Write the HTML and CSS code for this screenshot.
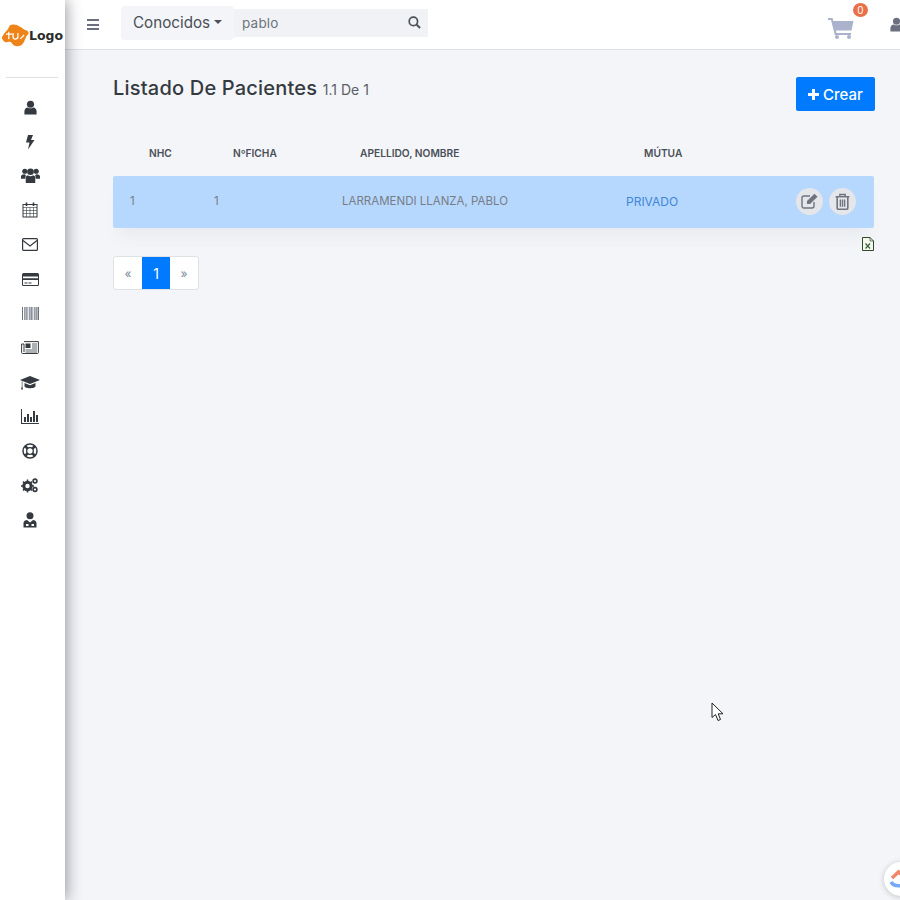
FILE: index.html
```html
<!DOCTYPE html>
<html lang="en">
<head>
    <meta charset="UTF-8">
    <title>Listado De Pacientes</title>
    <link rel="stylesheet" href="styles.css">
</head>
<body>
    <div class="app">
        <aside class="sidebar">
            <div class="logo">
                <svg class="logo-blob" viewBox="0 0 30 24"><path d="M9 1.500C12 -.5 17 .5 19 2.500C22 3 23 6 26 6.500C29 7.500 29.500 10 27.500 11.500C25.500 13 26 15 24.500 17C23.500 21 20 24 15.500 23C11.500 22.500 12 19 9 18.500C6 18.500 5 20 3 18C1 16 0 14 2 12C3 9 7 7 9 1.500Z" fill="#ee8418"/><path d="M8 8v8M5 10.500h6.500M12.500 9.500v4c0 3 4 3 5 0v-4M17.500 9.500v5.500M20 15.500l4-4" stroke="#fff" stroke-width="1.300" fill="none"/></svg>
                <span class="logo-text">Logo</span>
            </div>
            <hr class="side-rule">
            <nav class="side-nav">
                <a class="side-link"><svg viewBox="0 0 16 16" width="15" height="15"><circle cx="8" cy="4.500" r="3.800"/><path d="M1.500 15.500V12C1.500 9.500 3.500 8 5 8C6.500 9.200 9.500 9.200 11 8C12.500 8 14.500 9.500 14.500 12V15.500Z"/></svg></a>
                <a class="side-link"><svg viewBox="0 0 10 16" width="10" height="16"><path d="M3 1H8L6 6H9.500L3 15.500L4.500 8.500H1Z"/></svg></a>
                <a class="side-link"><svg viewBox="0 0 20 17" width="19" height="17"><circle cx="4" cy="4" r="2.700"/><circle cx="16" cy="4" r="2.700"/><circle cx="10" cy="4.500" r="3.500"/><path d="M0 12V9.500C0 8 2 7.300 3.500 7.300L5 8L4.500 12Z M20 12V9.500C20 8 18 7.300 16.500 7.300L15 8L15.500 12Z"/><path d="M5 16.500V11C5 9 6 8.500 7.500 8.500C9 9.500 11 9.500 12.500 8.500C14 8.500 15 9 15 11V16.500Z"/></svg></a>
                <a class="side-link"><svg viewBox="0 0 16 16" width="16" height="16" fill="none" stroke="#343a40"><rect x="1" y="2.500" width="14" height="12.500"/><path d="M1 5.500h14M1 8.500h14M1 11.500h14M4.500 5.500v9.500M8 5.500v9.500M11.500 5.500v9.500" stroke-width=".6"/><path d="M4.500 .5v3.500M11.500 .5v3.500" stroke-width="1.600"/></svg></a>
                <a class="side-link"><svg viewBox="0 0 16 13" width="16" height="13" fill="none" stroke="#343a40" stroke-width="1.200"><rect x=".6" y=".6" width="14.800" height="11.800" rx="1"/><path d="M1 2.500L8 8L15 2.500"/></svg></a>
                <a class="side-link"><svg viewBox="0 0 17 13" width="17" height="13"><path fill-rule="evenodd" d="M1.500 0h14A1.500 1.500 0 0 1 17 1.500v10a1.500 1.500 0 0 1-1.500 1.500h-14A1.500 1.500 0 0 1 0 11.500v-10A1.500 1.500 0 0 1 1.500 0ZM1 3.500v1.800h15V3.500ZM1 7v4.500c0 .3.200.500.500.500h14c.3 0 .500-.2.500-.5V7ZM2.500 9.500h3v1h-3ZM6.500 9.500h3v1h-3Z"/></svg></a>
                <a class="side-link"><svg viewBox="0 0 17 13" width="17" height="13" fill="#6c7280"><path d="M0 0h1v13H0ZM2 0h.7v13H2ZM3.500 0h1.200v13H3.500ZM5.500 0h.7v13h-.7ZM7 0h.7v13H7ZM8.500 0h1.300v13H8.500ZM10.500 0h.7v13h-.7ZM12 0h.7v13H12ZM13.500 0h1.200v13h-1.200ZM15.500 0h1.500v13h-1.500Z"/></svg></a>
                <a class="side-link"><svg viewBox="0 0 18 13" width="18" height="13" fill="none" stroke="#343a40"><path d="M3 .6H17.400V11.500a1 1 0 0 1-1 1H1.600a1 1 0 0 1-1-1V3H3V11"/><rect x="4.500" y="2.500" width="5" height="4.500" fill="#343a40" stroke="none"/><path d="M11 3h5M11 5h5M11 7h5M4.500 9h11.500M4.500 11h11.500" stroke-width=".8"/></svg></a>
                <a class="side-link"><svg viewBox="0 0 20 15" width="20" height="15"><path d="M10 1L20 5L10 9L0 5Z"/><path d="M4.500 8L10 10.200L15.500 8V11C15.500 14 4.500 14 4.500 11Z"/><path d="M1.800 6v5.500l-.8 3h2l-.6-3V6.500Z"/></svg></a>
                <a class="side-link"><svg viewBox="0 0 18 15" width="18" height="15"><path d="M0 0h1v14h17v1H0Z"/><path d="M3 8h2v5H3ZM6 5h2v8H6ZM9 8h2v5H9ZM12 2h2v11h-2ZM15 6h2v7h-2Z"/></svg></a>
                <a class="side-link"><svg viewBox="0 0 16 16" width="16" height="16" fill="none" stroke="#343a40"><circle cx="8" cy="8" r="7" stroke-width="1.500"/><circle cx="8" cy="8" r="3.300" stroke-width="1.300"/><path d="M3 3l2.800 2.800M13 3l-2.800 2.800M3 13l2.800-2.800M13 13l-2.800-2.800" stroke-width="2.600"/></svg></a>
                <a class="side-link"><svg viewBox="0 0 18 16" width="18" height="16" fill="none" stroke="#343a40"><circle cx="6.500" cy="9" r="3.700" stroke-width="3"/><circle cx="14" cy="4" r="1.900" stroke-width="1.600"/><circle cx="14" cy="12.500" r="1.900" stroke-width="1.600"/><path d="M6.500 2.500v13M0 9h13M2 4.500l9 9M11 4.500l-9 9" stroke-width="1.500" stroke-dasharray="2 9"/></svg></a>
                <a class="side-link"><svg viewBox="0 0 14 16" width="14" height="16"><circle cx="7" cy="3.800" r="3.500"/><path fill-rule="evenodd" d="M.5 15.500V11C.5 9 2.500 8 4 8L7 10.500L10 8C11.500 8 13.500 9 13.500 11V15.500ZM3 12v2h2.500v-2ZM8.500 12v2H11v-2Z"/></svg></a>
            </nav>
        </aside>

        <div class="main">
            <header class="topbar">
                <button class="burger"><span></span><span></span><span></span></button>
                <div class="search">
                    <button class="search-scope">Conocidos<i class="caret"></i></button>
                    <div class="search-box">
                        <span class="search-value">pablo</span>
                        <svg viewBox="0 0 14 14" width="13" height="13" fill="none" stroke="#495057" stroke-width="1.800"><circle cx="5.800" cy="5.800" r="4.500"/><path d="M9 9l4 4" stroke-width="2.200"/></svg>
                    </div>
                </div>
                <div class="top-right">
                    <div class="cart">
                        <svg viewBox="0 0 26 22" width="26" height="22"><path d="M0 1h4.500l.8 3H25.500l-2 9.500H8l.5 2.500H23v2H6.800L3 3H0Z" fill="#aab2cc"/><circle cx="9" cy="20" r="2" fill="#aab2cc"/><circle cx="21" cy="20" r="2" fill="#aab2cc"/></svg>
                        <span class="cart-badge">0</span>
                    </div>
                    <svg class="top-user" viewBox="0 0 16 16" width="15" height="15"><circle cx="8" cy="4.500" r="3.800"/><path d="M1.500 15.500V12C1.500 9.500 3.500 8 5 8C6.500 9.200 9.500 9.200 11 8C12.500 8 14.500 9.500 14.500 12V15.500Z"/></svg>
                </div>
            </header>

            <main class="content">
                <div class="page-head">
                    <h1>Listado De Pacientes <small>1.1 De 1</small></h1>
                    <button class="btn-create"><svg viewBox="0 0 11 11" width="11" height="11"><path d="M4 0h3v4h4v3H7v4H4V7H0V4h4Z" fill="#fff"/></svg>Crear</button>
                </div>

                <div class="thead">
                    <div>NHC</div>
                    <div>NºFICHA</div>
                    <div>APELLIDO, NOMBRE</div>
                    <div>MÚTUA</div>
                </div>
                <div class="trow">
                    <div>1</div>
                    <div>1</div>
                    <div>LARRAMENDI LLANZA, PABLO</div>
                    <div class="mutua">PRIVADO</div>
                    <div class="actions">
                        <button class="round-btn"><svg viewBox="0 0 18 16" width="18" height="16"><path d="M13 9v4a2 2 0 0 1-2 2H3a2 2 0 0 1-2-2V5a2 2 0 0 1 2-2h6" fill="none" stroke="#6f7480" stroke-width="1.400"/><path d="M6 8L13.500 .8l3 3L9 11H6Z" fill="#6f7480"/></svg></button>
                        <button class="round-btn"><svg viewBox="0 0 14 16" width="15" height="17" fill="none" stroke="#6f7480"><path d="M.5 3.500h13" stroke-width="1.400"/><path d="M4.500 3V1.300h5V3" stroke-width="1.400"/><path d="M2 3.500V14a1.300 1.300 0 0 0 1.300 1.300h7.400A1.300 1.300 0 0 0 12 14V3.500" stroke-width="1.500"/><path d="M5 6v7M7 6v7M9 6v7" stroke-width="1.300"/></svg></button>
                    </div>
                </div>
                <div class="excel-row">
                    <svg viewBox="0 0 12 14" width="12" height="14"><path d="M.5.500H8L11.500 4V13.500H.5Z" fill="#f6f8ee" stroke="#2f4a2a"/><path d="M8 .5V4h3.500" fill="none" stroke="#2f4a2a" stroke-width=".7"/><path d="M3.500 6.500L8 11.500M8 6.500L3.500 11.500" stroke="#35633a" stroke-width="1.200"/></svg>
                </div>
                <div class="pager">
                    <a class="page-item">«</a>
                    <a class="page-item active">1</a>
                    <a class="page-item">»</a>
                </div>
            </main>
        </div>
    </div>

    <svg class="cursor" viewBox="0 0 14 21" width="14" height="21"><path d="M1 1V15.500L4.500 12.500L7 18.500L9.500 17.500L7.200 11.800H12Z" fill="#fff" stroke="#222" stroke-width="1"/></svg>

    <div class="help-widget">
        <svg viewBox="0 0 20 20" width="20" height="20" fill="none"><path d="M3 9L9.500 3L16 9" stroke="#f0876a" stroke-width="3.500"/><path d="M2 13C5 18 14 18 17 13" stroke="#76a8f4" stroke-width="3.500"/></svg>
    </div>
</body>
</html>
```

FILE: styles.css
```css
* {
    margin: 0;
    padding: 0;
    box-sizing: border-box;
}

html, body {
    height: 100%;
    overflow: hidden;
}

body {
    font-family: Inter, "Open Sans", sans-serif;
    background: #f4f5f8;
    color: #343a40;
    position: relative;
}

button {
    border: 0;
    background: none;
    font-family: inherit;
}

.app {
    display: flex;
    height: 900px;
    width: 900px;
}

/* sidebar */
.sidebar {
    flex: 0 0 65px;
    background: #fff;
    box-shadow: 2px 0 14px rgba(40, 45, 60, 0.45);
    position: relative;
    z-index: 2;
}

.logo {
    display: flex;
    align-items: center;
    height: 50px;
    padding: 20px 0 0 1px;
}

.logo-blob {
    width: 29px;
    height: 23px;
    flex: none;
}

.logo-text {
    font-family: "DejaVu Sans", sans-serif;
    font-size: 12.500px;
    font-weight: 700;
    color: #2b2b2b;
    margin-left: -1px;
}

.side-rule {
    border: 0;
    border-top: 1px solid #dee2e6;
    margin: 27px 7px 0 6px;
}

.side-nav {
    display: flex;
    flex-direction: column;
    align-items: center;
    padding: 12px 5px 0 0;
    fill: #343a40;
}

.side-link {
    height: 34.400px;
    display: flex;
    align-items: center;
    justify-content: center;
}

/* topbar */
.main {
    flex: 1;
    min-width: 0;
}

.topbar {
    height: 50px;
    background: #fff;
    border-bottom: 1px solid #dfe1e6;
    display: flex;
    align-items: center;
    padding-left: 22px;
}

.burger {
    width: 12px;
    display: flex;
    flex-direction: column;
    gap: 2.500px;
}

.burger span {
    display: block;
    height: 2px;
    background: #6c6f80;
}

.search {
    display: flex;
    align-items: center;
    margin-left: 22px;
    margin-top: -4px;
}

.search-scope {
    height: 34px;
    width: 113px;
    background: #f4f5f8;
    border-radius: 4px;
    font-size: 15.200px;
    color: #495057;
    display: flex;
    align-items: center;
    padding-left: 12px;
}

.caret {
    width: 0;
    height: 0;
    border-left: 4px solid transparent;
    border-right: 4px solid transparent;
    border-top: 4px solid #495057;
    margin-left: 4px;
    margin-top: -2px;
}

.search-box {
    width: 194px;
    height: 28px;
    background: #f1f2f5;
    display: flex;
    align-items: center;
    justify-content: space-between;
    padding: 0 7px 0 8px;
}

.search-value {
    font-size: 13.500px;
    letter-spacing: 0.2px;
    color: #6c757d;
}

.top-right {
    margin-left: auto;
    display: flex;
    align-items: center;
    flex: none;
    margin-right: -4px;
}

.cart {
    position: relative;
    width: 26px;
    height: 22px;
    margin-top: 6px;
}

.cart-badge {
    position: absolute;
    top: -14px;
    left: 25px;
    width: 15px;
    height: 14px;
    line-height: 14px;
    border-radius: 50%;
    background: #e9714a;
    color: #fff;
    font-size: 10px;
    text-align: center;
}

.top-user {
    fill: #6c6f80;
    margin-left: 35px;
    margin-top: -1px;
}

/* content */
.content {
    padding: 27px 25px 0 48px;
}

.page-head {
    display: flex;
    justify-content: space-between;
    align-items: flex-start;
    height: 34px;
}

.page-head h1 {
    font-size: 20px;
    font-weight: 500;
    color: #343a40;
    letter-spacing: 0.2px;
    line-height: 22px;
}

.page-head small {
    font-size: 14px;
    font-weight: 400;
    letter-spacing: 0;
    color: #5a5f66;
}

.btn-create {
    width: 79px;
    height: 34px;
    background: #007bff;
    border-radius: 2px;
    color: #fff;
    font-size: 15px;
    font-weight: 500;
    display: flex;
    align-items: center;
    justify-content: center;
    gap: 4px;
}

.thead, .trow {
    display: grid;
    align-items: center;
}

.thead {
    grid-template-columns: 84px 127px 284px 1fr;
    padding-left: 36px;
    margin-top: 34px;
    height: 16px;
    font-size: 10.200px;
    font-weight: 600;
    color: #495057;
}

.trow {
    grid-template-columns: 84px 128px 284px 1fr auto;
    padding: 0 18px 2px 17px;
    margin: 15px 1px 0 0;
    height: 52px;
    background: #b6d7fe;
    border-radius: 2px;
    font-size: 11.500px;
    color: #777d85;
    box-shadow: 0 14px 16px -6px rgba(90, 100, 130, 0.07);
}

.mutua {
    color: #3f86d6;
    font-size: 12px;
}

.actions {
    display: flex;
    gap: 6px;
}

.round-btn {
    width: 27px;
    height: 27px;
    border-radius: 50%;
    background: #e4e6e9;
    display: flex;
    align-items: center;
    justify-content: center;
}

.excel-row {
    display: flex;
    justify-content: flex-end;
    padding-right: 1px;
    margin-top: 9px;
    height: 14px;
}

.pager {
    display: inline-flex;
    margin-top: 5px;
    height: 34px;
    border: 1px solid #dee2e6;
    border-radius: 3px;
    background: #fff;
    overflow: hidden;
}

.page-item {
    width: 28px;
    display: flex;
    align-items: center;
    justify-content: center;
    font-size: 12px;
    color: #7a8aa0;
}

.page-item.active {
    background: #007bff;
    color: #fff;
    font-size: 14px;
}

/* floating bits */
.cursor {
    position: absolute;
    left: 711px;
    top: 702px;
}

.help-widget {
    position: absolute;
    left: 884px;
    top: 862px;
    width: 34px;
    height: 34px;
    border-radius: 50%;
    background: #fff;
    box-shadow: 0 1px 6px rgba(0, 0, 0, 0.2);
    padding: 7px 0 0 5px;
}
```
